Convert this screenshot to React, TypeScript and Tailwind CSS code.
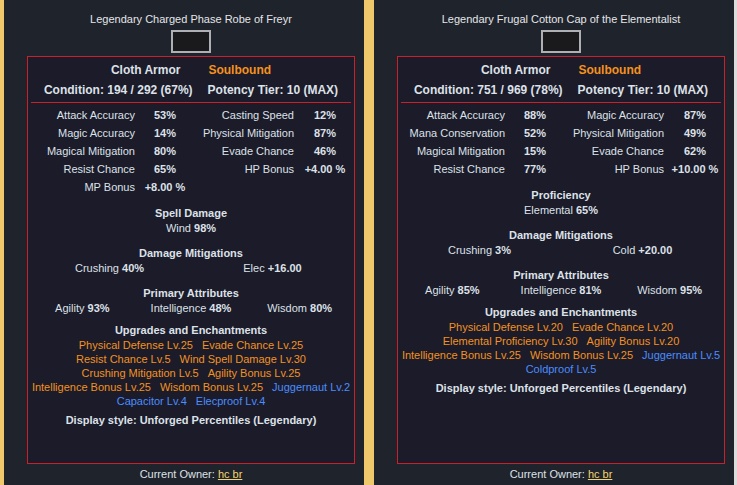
import React from "react";

type Stat = [string, string];
type Up = { t: string; c: "o" | "b" };

interface Item {
  title: string;
  cond: string;
  stats: Stat[];
  sections: { head: string; cols: number; vals: React.ReactNode[] }[];
  ups: Up[][];
}

const V = ({ l, v }: { l: string; v: string }) => (
  <span>
    {l} <b className="font-bold">{v}</b>
  </span>
);

const items: Item[] = [
  {
    title: "Legendary Charged Phase Robe of Freyr",
    cond: "Condition: 194 / 292 (67%)",
    stats: [
      ["Attack Accuracy", "53%"],
      ["Casting Speed", "12%"],
      ["Magic Accuracy", "14%"],
      ["Physical Mitigation", "87%"],
      ["Magical Mitigation", "80%"],
      ["Evade Chance", "46%"],
      ["Resist Chance", "65%"],
      ["HP Bonus", "+4.00 %"],
      ["MP Bonus", "+8.00 %"],
    ],
    sections: [
      { head: "Spell Damage", cols: 1, vals: [<V key="a" l="Wind" v="98%" />] },
      {
        head: "Damage Mitigations",
        cols: 2,
        vals: [<V key="a" l="Crushing" v="40%" />, <V key="b" l="Elec" v="+16.00" />],
      },
      {
        head: "Primary Attributes",
        cols: 3,
        vals: [
          <V key="a" l="Agility" v="93%" />,
          <V key="b" l="Intelligence" v="48%" />,
          <V key="c" l="Wisdom" v="80%" />,
        ],
      },
    ],
    ups: [
      [
        { t: "Physical Defense Lv.25", c: "o" },
        { t: "Evade Chance Lv.25", c: "o" },
      ],
      [
        { t: "Resist Chance Lv.5", c: "o" },
        { t: "Wind Spell Damage Lv.30", c: "o" },
      ],
      [
        { t: "Crushing Mitigation Lv.5", c: "o" },
        { t: "Agility Bonus Lv.25", c: "o" },
      ],
      [
        { t: "Intelligence Bonus Lv.25", c: "o" },
        { t: "Wisdom Bonus Lv.25", c: "o" },
        { t: "Juggernaut Lv.2", c: "b" },
      ],
      [
        { t: "Capacitor Lv.4", c: "b" },
        { t: "Elecproof Lv.4", c: "b" },
      ],
    ],
  },
  {
    title: "Legendary Frugal Cotton Cap of the Elementalist",
    cond: "Condition: 751 / 969 (78%)",
    stats: [
      ["Attack Accuracy", "88%"],
      ["Magic Accuracy", "87%"],
      ["Mana Conservation", "52%"],
      ["Physical Mitigation", "49%"],
      ["Magical Mitigation", "15%"],
      ["Evade Chance", "62%"],
      ["Resist Chance", "77%"],
      ["HP Bonus", "+10.00 %"],
    ],
    sections: [
      { head: "Proficiency", cols: 1, vals: [<V key="a" l="Elemental" v="65%" />] },
      {
        head: "Damage Mitigations",
        cols: 2,
        vals: [<V key="a" l="Crushing" v="3%" />, <V key="b" l="Cold" v="+20.00" />],
      },
      {
        head: "Primary Attributes",
        cols: 3,
        vals: [
          <V key="a" l="Agility" v="85%" />,
          <V key="b" l="Intelligence" v="81%" />,
          <V key="c" l="Wisdom" v="95%" />,
        ],
      },
    ],
    ups: [
      [
        { t: "Physical Defense Lv.20", c: "o" },
        { t: "Evade Chance Lv.20", c: "o" },
      ],
      [
        { t: "Elemental Proficiency Lv.30", c: "o" },
        { t: "Agility Bonus Lv.20", c: "o" },
      ],
      [
        { t: "Intelligence Bonus Lv.25", c: "o" },
        { t: "Wisdom Bonus Lv.25", c: "o" },
        { t: "Juggernaut Lv.5", c: "b" },
      ],
      [{ t: "Coldproof Lv.5", c: "b" }],
    ],
  },
];

function Panel({ it }: { it: Item }) {
  return (
    <div className="w-[360px] h-[485px] bg-[#1f232b] pl-[23px] pr-[9px] flex flex-col text-[#dde1e8]">
      <div className="pt-[12px] h-[26px] leading-[14px] text-[11px] text-center text-[#e4e6ea]">
        {it.title}
      </div>
      <div className="mt-[4px] mx-auto w-[40px] h-[23px] border-2 border-[#aeb0b3] bg-[#1a1a1c]" />
      <div className="mt-[3px] h-[408px] border border-[#c9202b] bg-[#1b1b29] flex flex-col">
        <div className="pt-[3px] h-[23px] flex justify-center items-center gap-[28px] text-[12px] font-bold">
          <span>Cloth Armor</span>
          <span className="text-[#f5921e]">Soulbound</span>
        </div>
        <div className="h-[20px] flex justify-center items-center gap-[15px] text-[12px] font-bold">
          <span>{it.cond}</span>
          <span>Potency Tier: 10 (MAX)</span>
        </div>
        <div className="mt-[2px] mx-[3px] h-px bg-[#c9202b]" />
        <div className="mt-[3px] grid grid-cols-[112px_50px_109px_52px] text-[11px]">
          {it.stats.map(([l, v], i) => (
            <React.Fragment key={i}>
              <div className={"h-[18px] flex items-center justify-end pr-[5px] " + (i % 2 ? "" : "")}>{l}</div>
              <div className="h-[18px] flex items-center justify-center font-bold whitespace-nowrap">{v}</div>
            </React.Fragment>
          ))}
        </div>
        {it.sections.map((s, i) => (
          <div key={i} className="mt-[10px] text-[11px] leading-[15px] text-center">
            <div className="font-bold">{s.head}</div>
            <div
              className={
                s.cols === 1 ? "" : s.cols === 2 ? "grid grid-cols-2" : "grid grid-cols-3"
              }
            >
              {s.vals.map((v, j) => (
                <div key={j}>{v}</div>
              ))}
            </div>
          </div>
        ))}
        <div className="mt-[7px] text-[11px] leading-[15px] text-center font-bold">
          Upgrades and Enchantments
        </div>
        <div className="text-[11px] leading-[14px]">
          {it.ups.map((row, i) => (
            <div key={i} className="flex justify-center gap-[9px]">
              {row.map((u, j) => (
                <span key={j} className={u.c === "o" ? "text-[#f29222]" : "text-[#4a8dff]"}>
                  {u.t}
                </span>
              ))}
            </div>
          ))}
        </div>
        <div className="mt-[5px] text-[11px] leading-[15px] text-center font-bold">
          Display style: Unforged Percentiles (Legendary)
        </div>
      </div>
      <div className="mt-[3px] text-[11px] leading-[14px] text-center">
        Current Owner: <span className="text-[#f3d36e] underline">hc br</span>
      </div>
    </div>
  );
}

export default function App() {
  return (
    <div
      className="w-[737px] h-[485px] bg-[#efc86b] flex overflow-hidden"
      style={{ fontFamily: '"Liberation Sans", Arial, sans-serif' }}
    >
      <div className="w-[4px]" />
      <Panel it={items[0]} />
      <div className="w-[10px]" />
      <Panel it={items[1]} />
      <div className="w-[3px] bg-[#dcdcdc]" />
    </div>
  );
}
